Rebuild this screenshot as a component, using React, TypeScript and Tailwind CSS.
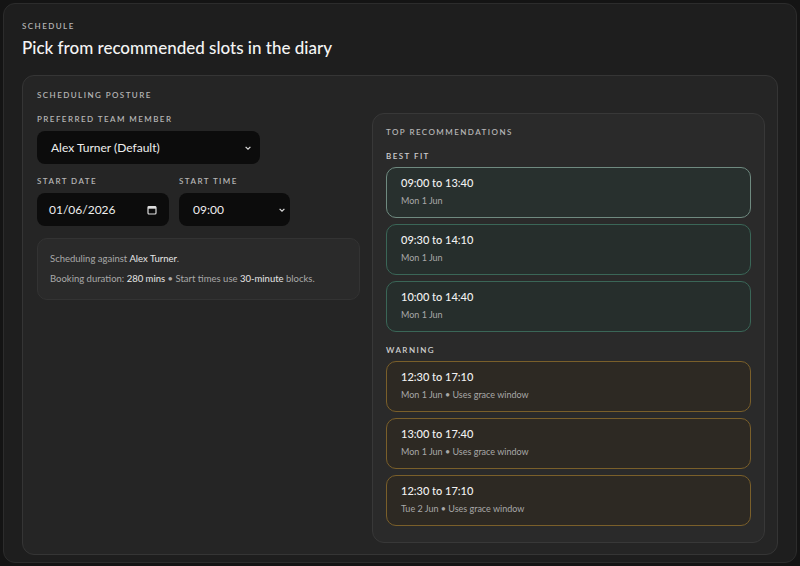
import React from "react";

const lbl = "text-[8px] font-semibold tracking-[0.18em] uppercase text-[#b5b5b5]";

function Slot({ t, d, warn, first }: { t: string; d: string; warn?: boolean; first?: boolean }) {
  return (
    <div
      className={`h-[51px] rounded-[10px] border px-[14px] pt-[8px] ${
        warn
          ? "border-[#7a5f2a] bg-[#2d2923]"
          : first
          ? "border-[#6f8a80] bg-[#28302e]"
          : "border-[#3a6657] bg-[#262e2c]"
      }`}
    >
      <div className="text-[11px] font-medium text-[#f2f2f2] leading-[14px]">{t}</div>
      <div className="mt-[5px] text-[9px] text-[#a8a8a8] leading-[12px]">{d}</div>
    </div>
  );
}

export default function App() {
  return (
    <div className="w-[800px] h-[566px] bg-[#141414] p-[3px]" style={{ fontFamily: "Lato, 'Noto Sans', sans-serif" }}>
      <div className="h-[560px] rounded-[12px] border border-[#2c2c2c] bg-[#1e1e1e] px-[18px] pt-[16px]">
        <div className={lbl + " text-[#a0a0a0]"}>Schedule</div>
        <div className="mt-[5px] text-[17px] font-medium text-[#f4f4f4] leading-[22px]">Pick from recommended slots in the diary</div>
        <div className="mt-[16px] h-[480px] rounded-[12px] border border-[#353535] bg-[#252525] pl-[14px] pr-[14px] pt-[13px]">
          <div className="grid grid-cols-[323px_393px] gap-3">
            <div>
              <div className={lbl}>Scheduling posture</div>
              <div className={lbl + " mt-[12px]"}>Preferred team member</div>
              <div className="mt-[6px] w-[223px] h-[33px] rounded-[8px] bg-[#0c0c0c] flex items-center justify-between pl-[14px] pr-[8px] text-[12px] text-[#eee]">
                <span>Alex Turner (Default)</span>
                <svg width="8" height="8" viewBox="0 0 10 10"><path d="M2 3.5 5 6.5 8 3.5" stroke="#ddd" strokeWidth="1.5" fill="none" /></svg>
              </div>
              <div className="mt-[11px] flex gap-[10px]">
                <div>
                  <div className={lbl}>Start date</div>
                  <div className="mt-[6px] w-[132px] h-[33px] rounded-[8px] bg-[#0c0c0c] flex items-center justify-between pl-[12px] pr-[12px] text-[12px] text-[#eee]">
                    <span>01/06/2026</span>
                    <svg width="10" height="10" viewBox="0 0 10 10"><rect x="1" y="1.5" width="8" height="7.5" rx="1" stroke="#ddd" strokeWidth="1.2" fill="none" /><rect x="1" y="1.5" width="8" height="2.2" fill="#ddd" /></svg>
                  </div>
                </div>
                <div>
                  <div className={lbl}>Start time</div>
                  <div className="mt-[6px] w-[111px] h-[33px] rounded-[8px] bg-[#0c0c0c] flex items-center justify-between pl-[14px] pr-[4px] text-[12px] text-[#eee]">
                    <span>09:00</span>
                    <svg width="8" height="8" viewBox="0 0 10 10"><path d="M2 3.5 5 6.5 8 3.5" stroke="#ddd" strokeWidth="1.5" fill="none" /></svg>
                  </div>
                </div>
              </div>
              <div className="mt-[12px] h-[62px] rounded-[10px] border border-[#333] bg-[#2a2a2a] px-[12px] pt-[14px] text-[9.5px] text-[#a9a9a9] leading-[12px]">
                <div>Scheduling against <span className="text-[#e6e6e6]">Alex Turner</span>.</div>
                <div className="mt-[8px]">Booking duration: <span className="text-[#e6e6e6]">280 mins</span> • Start times use <span className="text-[#e6e6e6]">30-minute</span> blocks.</div>
              </div>
            </div>
            <div className="mt-[24px] h-[430px] rounded-[12px] border border-[#383838] bg-[#2a2a2a] px-[13px] pt-[12px]">
              <div className={lbl}>Top recommendations</div>
              <div className={lbl + " mt-[12px] text-[#cfcfcf]"}>Best fit</div>
              <div className="mt-[5px] flex flex-col gap-[6px]">
                <Slot t="09:00 to 13:40" d="Mon 1 Jun" first />
                <Slot t="09:30 to 14:10" d="Mon 1 Jun" />
                <Slot t="10:00 to 14:40" d="Mon 1 Jun" />
              </div>
              <div className={lbl + " mt-[12px] text-[#cfcfcf]"}>Warning</div>
              <div className="mt-[5px] flex flex-col gap-[6px]">
                <Slot t="12:30 to 17:10" d="Mon 1 Jun • Uses grace window" warn />
                <Slot t="13:00 to 17:40" d="Mon 1 Jun • Uses grace window" warn />
                <Slot t="12:30 to 17:10" d="Tue 2 Jun • Uses grace window" warn />
              </div>
            </div>
          </div>
        </div>
      </div>
    </div>
  );
}
